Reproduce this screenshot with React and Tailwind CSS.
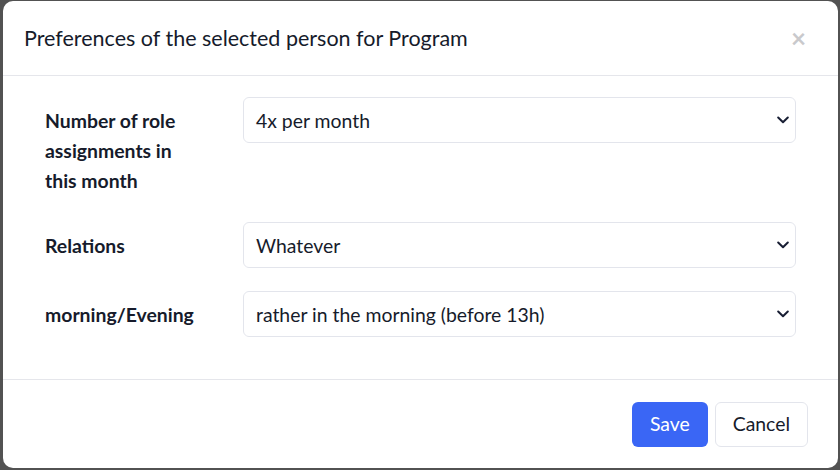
import React from "react";

function Chevron() {
  return (
    <svg width="12" height="8" viewBox="0 0 12 8" fill="none" className="absolute right-[6px] top-1/2 -translate-y-1/2 pointer-events-none">
      <path d="M1.2 1.5L6 6.3l4.8-4.8" stroke="#1a2035" strokeWidth="2" strokeLinecap="round" strokeLinejoin="round" />
    </svg>
  );
}

function SelectBox({ value }) {
  return (
    <div className="relative flex-1 h-[46px] border border-[#e3e5ec] rounded-[6px] bg-white flex items-center pl-[12px] pt-[1px] text-[19.4px] text-[#161b2b]">
      {value}
      <Chevron />
    </div>
  );
}

function Row({ label, value, className = "" }) {
  return (
    <div className={"flex items-start gap-[18px] " + className}>
      <div className="w-[180px] pt-[9px] pb-[8px] text-[19.4px] leading-[30px] font-bold text-[#161b2b]">{label}</div>
      <SelectBox value={value} />
    </div>
  );
}

export default function App() {
  return (
    <div className="w-[840px] h-[470px] bg-[#525252] pt-[1px] pl-[3px] pr-[2px] pb-[2px]" style={{ fontFamily: "Lato, 'Noto Sans', sans-serif" }}>
      <div className="w-full h-full bg-white rounded-[10px] flex flex-col overflow-hidden">
        <div className="h-[75px] shrink-0 flex items-center justify-between pl-[21px] pr-[32px] border-b border-[#e5e6eb]">
          <div className="text-[21.5px] text-[#161b2b]">Preferences of the selected person for Program</div>
          <div className="text-[26px] leading-none text-[#c9c9cc] font-bold">×</div>
        </div>
        <div className="flex-1 px-[42px] pt-[21px] border-b border-[#e5e6eb]">
          <Row label={<>Number of role<br />assignments in<br />this month</>} value="4x per month" />
          <Row className="mt-[18px]" label="Relations" value="Whatever" />
          <Row className="mt-[22px]" label="morning/Evening" value="rather in the morning (before 13h)" />
        </div>
        <div className="h-[88px] shrink-0 flex items-center justify-end gap-[7px] pr-[30px]">
          <button className="h-[45px] px-[18px] rounded-[6px] bg-[#3a66f5] text-white text-[19.4px]">Save</button>
          <button className="h-[45px] px-[17px] rounded-[6px] border border-[#e3e5ec] bg-white text-[#161b2b] text-[19.4px]">Cancel</button>
        </div>
      </div>
    </div>
  );
}
